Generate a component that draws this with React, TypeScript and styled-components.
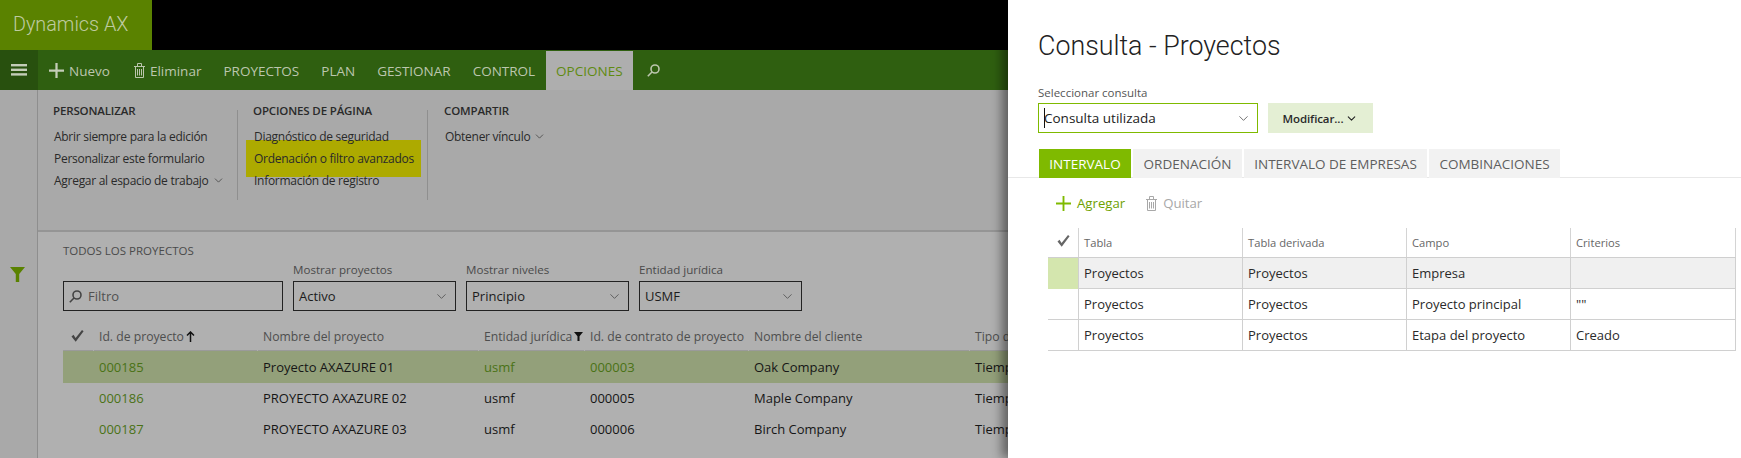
import styled, { createGlobalStyle } from "styled-components";
import { ChevronDown } from "lucide-react";

const GlobalStyle = createGlobalStyle`
  html, body {
    margin: 0;
    padding: 0;
    background: #fff;
    font-family: "Open Sans", "Noto Sans", sans-serif;
  }
  * { box-sizing: border-box; }
`;

const Page = styled.div`
  position: relative;
  width: 1741px;
  height: 458px;
  overflow: hidden;
  background: #b0b0b0;
  font-size: 13px;
`;

const TopBar = styled.div`
  height: 50px;
  background: #000;
`;

const Logo = styled.div`
  width: 152px;
  height: 50px;
  padding-left: 13px;
  background: #5a8200;
  color: #bfcba0;
  font-family: Roboto, "Open Sans", sans-serif;
  font-size: 19.8px;
  font-weight: 300;
  line-height: 50px;
`;

const NavBar = styled.div`
  display: flex;
  align-items: stretch;
  height: 40px;
  padding-top: 1px;
  background: #2f5f10;
  color: #bcc6ae;
  font-size: 13.5px;
`;

const Burger = styled.div`
  display: flex;
  align-items: center;
  justify-content: center;
  width: 38px;
  margin-top: -1px;
  padding-bottom: 1px;
  background: #28500e;
`;

const NavAction = styled.div<{ $left: number }>`
  display: flex;
  align-items: center;
  gap: 5px;
  margin-left: ${(p) => p.$left}px;
`;

const NavTab = styled.div<{ $active?: boolean; $left: number }>`
  display: flex;
  align-items: center;
  margin-left: ${(p) => p.$left}px;
  ${(p) =>
    p.$active &&
    `
    padding: 0 10px;
    background: #aeaeae;
    color: #5f8a10;
  `}
`;

const SearchButton = styled.div`
  display: flex;
  align-items: center;
  margin-left: 14px;
`;

const Body = styled.div`
  display: flex;
  height: 368px;
`;

const Rail = styled.div`
  flex: none;
  width: 38px;
  padding: 177px 0 0 10px;
  border-right: 1px solid #8e8e8e;
  background: #a9a9a9;
`;

const Main = styled.div`
  flex: 1;
  min-width: 0;
`;

const Ribbon = styled.div`
  display: flex;
  height: 142px;
  padding: 20px 0 0 15px;
  border-bottom: 2px solid #959595;
  background: #a9a9a9;
  color: #2a2a2a;
  isolation: isolate;
`;

const RibbonGroup = styled.div<{ $width: number }>`
  width: ${(p) => p.$width}px;
  height: 90px;
  padding-left: 15px;
  border-right: 1px solid #8f8f8f;
  &:first-child {
    padding-left: 0;
  }
  &:last-child {
    border-right: 0;
    padding-left: 16px;
  }
`;

const RibbonTitle = styled.div`
  height: 20px;
  margin-top: -9px;
  margin-bottom: 4px;
  font-size: 11.5px;
  font-weight: 600;
  letter-spacing: -0.15px;
  line-height: 20px;
  white-space: nowrap;
`;

const RibbonItem = styled.div<{ $marked?: boolean }>`
  position: relative;
  display: flex;
  align-items: center;
  gap: 3px;
  height: 22px;
  padding-left: 1px;
  font-size: 12px;
  letter-spacing: -0.28px;
  white-space: nowrap;
  ${(p) =>
    p.$marked &&
    `
    &::before {
      content: "";
      position: absolute;
      z-index: -1;
      left: -7px;
      top: -7px;
      width: 175px;
      height: 37px;
      background: #adaa00;
    }
  `}
`;

const ListArea = styled.div`
  padding: 11px 0 0 25px;
`;

const ListTitle = styled.div`
  height: 16px;
  color: #4a4a4a;
  font-size: 11.5px;
  line-height: 16px;
`;

const FilterRow = styled.div`
  display: flex;
  align-items: flex-end;
  gap: 10px;
  margin-top: 4px;
`;

const Field = styled.div`
  display: flex;
  flex-direction: column;
  width: 163px;
`;

const FieldLabel = styled.div`
  height: 18px;
  color: #4a4a4a;
  font-size: 11.6px;
  line-height: 14px;
`;

const Control = styled.div<{ $width?: number }>`
  display: flex;
  align-items: center;
  justify-content: space-between;
  width: ${(p) => p.$width ?? 163}px;
  height: 30px;
  padding: 0 6px 0 5px;
  border: 1px solid #222;
  color: #1c1c1c;
  font-size: 13px;
`;

const FilterText = styled.span`
  flex: 1;
  margin-left: 6px;
  color: #505050;
`;

const gridColumns = "30px 164px 221px 106px 164px 221px 400px";

const ListHeader = styled.div`
  display: grid;
  grid-template-columns: ${gridColumns};
  height: 28px;
  margin-top: 12px;
`;

const HeadCell = styled.div`
  display: flex;
  align-items: center;
  gap: 2px;
  height: 28px;
  margin-left: 1px;
  padding-left: 5px;
  border-bottom: 1px solid #9a9a9a;
  color: #4e4e4e;
  font-size: 12.2px;
  white-space: nowrap;
`;

const CheckCell = styled(HeadCell)`
  justify-content: center;
  margin-left: 0;
  padding: 0 2px 2px 0;
`;

const ListRow = styled.div<{ $selected?: boolean }>`
  display: grid;
  grid-template-columns: ${gridColumns};
  align-items: center;
  height: 31px;
  padding-bottom: 1px;
  background: ${(p) => (p.$selected ? "#93a07a" : "transparent")};
  color: #161616;
  font-size: 13px;
  &:first-of-type {
    height: 32px;
  }
`;

const ListCell = styled.div<{ $link?: boolean }>`
  padding-left: 6px;
  color: ${(p) => (p.$link ? "#4a7216" : "inherit")};
  white-space: nowrap;
`;

const Panel = styled.div`
  position: absolute;
  top: 0;
  right: 0;
  width: 733px;
  height: 458px;
  background: #fff;
  box-shadow: -6px 0 10px rgba(0, 0, 0, 0.45);
`;

const PanelTitle = styled.h1`
  height: 64px;
  margin: 0;
  padding: 27px 0 0 30px;
  color: #222;
  font-family: Roboto, "Open Sans", sans-serif;
  font-size: 26.8px;
  font-weight: 300;
  line-height: 38px;
`;

const QueryArea = styled.div`
  padding: 21px 0 0 30px;
`;

const QueryLabel = styled.div`
  height: 18px;
  color: #555;
  font-size: 11.5px;
  line-height: 16px;
`;

const QueryRow = styled.div`
  display: flex;
  gap: 10px;
`;

const QuerySelect = styled.div`
  display: flex;
  align-items: center;
  width: 220px;
  height: 30px;
  padding: 0 6px 0 5px;
  border: 1px solid #7fba00;
  color: #222;
  font-size: 13.5px;
`;

const Caret = styled.span`
  width: 1px;
  height: 20px;
  margin-right: -1px;
  background: #111;
`;

const QueryText = styled.span`
  flex: 1;
`;

const ModifyButton = styled.div`
  display: flex;
  align-items: center;
  justify-content: center;
  gap: 2px;
  width: 105px;
  height: 30px;
  background: #e4efd4;
  color: #2a2a2a;
  font-size: 11.5px;
  font-weight: 600;
  letter-spacing: -0.1px;
`;

const TabStrip = styled.div`
  display: flex;
  gap: 2px;
  height: 29px;
  margin-top: 16px;
  padding-left: 31px;
  border-bottom: 1px solid #e8e8e8;
`;

const Tab = styled.div<{ $active?: boolean; $width: number }>`
  display: flex;
  align-items: center;
  justify-content: center;
  width: ${(p) => p.$width}px;
  height: 29px;
  background: ${(p) => (p.$active ? "#7fba00" : "#f2f2f2")};
  color: ${(p) => (p.$active ? "#fff" : "#5e5e5e")};
  font-size: 13.5px;
  white-space: nowrap;
`;

const ActionBar = styled.div`
  display: flex;
  align-items: center;
  gap: 21px;
  height: 50px;
  padding-left: 48px;
`;

const ActionButton = styled.div<{ $disabled?: boolean }>`
  display: flex;
  align-items: center;
  gap: 6px;
  color: ${(p) => (p.$disabled ? "#a8a8a8" : "#6ea100")};
  font-size: 13.2px;
`;

const QueryTable = styled.div`
  width: 688px;
  margin-left: 40px;
`;

const queryColumns = "31px 164px 164px 164px 165px";

const QueryHead = styled.div`
  display: grid;
  grid-template-columns: ${queryColumns};
  height: 30px;
  border-bottom: 1px solid #cfcfcf;
`;

const QueryHeadCell = styled.div`
  padding: 7px 0 0 5px;
  border-right: 1px solid #d4d4d4;
  color: #666;
  font-size: 11.2px;
  line-height: 16px;
`;

const QueryCheckCell = styled(QueryHeadCell)`
  display: flex;
  justify-content: center;
  padding: 7px 0 0;
`;

const QueryBodyRow = styled.div<{ $current?: boolean }>`
  display: grid;
  grid-template-columns: ${queryColumns};
  height: 31px;
  border-bottom: 1px solid #d0d0d0;
  background: ${(p) => (p.$current ? "#f0f0f0" : "#fff")};
`;

const QueryCell = styled.div`
  padding-left: 5px;
  border-right: 1px solid #d0d0d0;
  color: #2a2a2a;
  font-size: 13px;
  line-height: 31px;
  white-space: nowrap;
`;

const RowMarker = styled.div<{ $current?: boolean }>`
  border-right: 1px solid #d0d0d0;
  background: ${(p) => (p.$current ? "#d4e6ae" : "transparent")};
`;

const PlusIcon = ({ size, color, weight }: { size: number; color: string; weight: number }) => (
  <svg width={size} height={size} viewBox="0 0 16 16">
    <path d="M8 0V16M0 8H16" stroke={color} strokeWidth={weight} fill="none" />
  </svg>
);

const TrashIcon = ({ color }: { color: string }) => (
  <svg width="11" height="15" viewBox="0 0 11 15" fill="none" stroke={color}>
    <path d="M0 3.5H11M3.5 3V0.5H7.5V3" />
    <path d="M1.5 3.5V14.5H9.5V3.5M3.5 6V12.5M5.5 6V12.5M7.5 6V12.5" />
  </svg>
);

const SearchIcon = ({ color }: { color: string }) => (
  <svg width="13" height="13" viewBox="0 0 13 13" fill="none" stroke={color} strokeWidth="1.6">
    <circle cx="8" cy="5" r="4" />
    <path d="M5 8L0.8 12.2" />
  </svg>
);

const CheckIcon = ({ color }: { color: string }) => (
  <svg width="13" height="12" viewBox="0 0 13 12">
    <path d="M0.5 6.5L2.5 4.8L4.6 8L11 0L12.6 1.2L4.7 11.8Z" fill={color} />
  </svg>
);

const FunnelIcon = ({ size, color }: { size: number; color: string }) => (
  <svg width={size} height={size} viewBox="0 0 14 14">
    <path d="M0 0H14L8.6 6.5V14H5.4V6.5Z" fill={color} />
  </svg>
);

const ArrowUpIcon = () => (
  <svg width="9" height="11" viewBox="0 0 9 11" fill="none" stroke="#111" strokeWidth="1.5">
    <path d="M4.5 11V1M1 4.5L4.5 1L8 4.5" />
  </svg>
);

const Chevron = ({ color = "#444", size = 15, weight = 1.2 }: { color?: string; size?: number; weight?: number }) => (
  <ChevronDown size={size} color={color} strokeWidth={weight} />
);

const projectRows = [
  { id: "000185", name: "Proyecto AXAZURE 01", contract: "000003", client: "Oak Company", selected: true },
  { id: "000186", name: "PROYECTO AXAZURE 02", contract: "000005", client: "Maple Company" },
  { id: "000187", name: "PROYECTO AXAZURE 03", contract: "000006", client: "Birch Company" },
];

const queryRows = [
  { field: "Empresa", criteria: "", current: true },
  { field: "Proyecto principal", criteria: '""' },
  { field: "Etapa del proyecto", criteria: "Creado" },
];

export default function App() {
  return (
    <Page>
      <GlobalStyle />
      <TopBar>
        <Logo>Dynamics AX</Logo>
      </TopBar>
      <NavBar>
        <Burger>
          <svg width="16" height="12" viewBox="0 0 16 12" fill="#c4cdb8">
            <rect width="16" height="2.4" />
            <rect y="4.6" width="16" height="2.4" />
            <rect y="9.2" width="16" height="2.4" />
          </svg>
        </Burger>
        <NavAction $left={11}>
          <PlusIcon size={15} color="#c4cdb8" weight={2.4} />
          Nuevo
        </NavAction>
        <NavAction $left={24}>
          <TrashIcon color="#bcc6ae" />
          Eliminar
        </NavAction>
        <NavTab $left={22}>PROYECTOS</NavTab>
        <NavTab $left={22}>PLAN</NavTab>
        <NavTab $left={22}>GESTIONAR</NavTab>
        <NavTab $left={22}>CONTROL</NavTab>
        <NavTab $left={11} $active>
          OPCIONES
        </NavTab>
        <SearchButton>
          <SearchIcon color="#bcc6ae" />
        </SearchButton>
      </NavBar>
      <Body>
        <Rail>
          <FunnelIcon size={15} color="#5a8200" />
        </Rail>
        <Main>
          <Ribbon>
            <RibbonGroup $width={185}>
              <RibbonTitle>PERSONALIZAR</RibbonTitle>
              <RibbonItem>Abrir siempre para la edición</RibbonItem>
              <RibbonItem>Personalizar este formulario</RibbonItem>
              <RibbonItem>
                Agregar al espacio de trabajo <Chevron size={13} weight={1.5} />
              </RibbonItem>
            </RibbonGroup>
            <RibbonGroup $width={190}>
              <RibbonTitle>OPCIONES DE PÁGINA</RibbonTitle>
              <RibbonItem>Diagnóstico de seguridad</RibbonItem>
              <RibbonItem $marked>Ordenación o filtro avanzados</RibbonItem>
              <RibbonItem>Información de registro</RibbonItem>
            </RibbonGroup>
            <RibbonGroup $width={200}>
              <RibbonTitle>COMPARTIR</RibbonTitle>
              <RibbonItem>
                Obtener vínculo <Chevron size={13} weight={1.5} />
              </RibbonItem>
            </RibbonGroup>
          </Ribbon>
          <ListArea>
            <ListTitle>TODOS LOS PROYECTOS</ListTitle>
            <FilterRow>
              <Control $width={220}>
                <SearchIcon color="#444" />
                <FilterText>Filtro</FilterText>
              </Control>
              <Field>
                <FieldLabel>Mostrar proyectos</FieldLabel>
                <Control>
                  Activo <Chevron />
                </Control>
              </Field>
              <Field>
                <FieldLabel>Mostrar niveles</FieldLabel>
                <Control>
                  Principio <Chevron />
                </Control>
              </Field>
              <Field>
                <FieldLabel>Entidad jurídica</FieldLabel>
                <Control>
                  USMF <Chevron />
                </Control>
              </Field>
            </FilterRow>
            <ListHeader>
              <CheckCell>
                <CheckIcon color="#444" />
              </CheckCell>
              <HeadCell>
                Id. de proyecto
                <ArrowUpIcon />
              </HeadCell>
              <HeadCell>Nombre del proyecto</HeadCell>
              <HeadCell>
                Entidad jurídica
                <FunnelIcon size={9} color="#111" />
              </HeadCell>
              <HeadCell>Id. de contrato de proyecto</HeadCell>
              <HeadCell>Nombre del cliente</HeadCell>
              <HeadCell>Tipo de proyecto</HeadCell>
            </ListHeader>
            <div>
              {projectRows.map((row) => (
                <ListRow key={row.id} $selected={row.selected}>
                  <span />
                  <ListCell $link>{row.id}</ListCell>
                  <ListCell>{row.name}</ListCell>
                  <ListCell $link={row.selected}>usmf</ListCell>
                  <ListCell $link={row.selected}>{row.contract}</ListCell>
                  <ListCell>{row.client}</ListCell>
                  <ListCell>Tiempo y material</ListCell>
                </ListRow>
              ))}
            </div>
          </ListArea>
        </Main>
      </Body>
      <Panel>
        <PanelTitle>Consulta - Proyectos</PanelTitle>
        <QueryArea>
          <QueryLabel>Seleccionar consulta</QueryLabel>
          <QueryRow>
            <QuerySelect>
              <Caret />
              <QueryText>Consulta utilizada</QueryText>
              <Chevron />
            </QuerySelect>
            <ModifyButton>
              Modificar... <Chevron size={13} color="#222" weight={2} />
            </ModifyButton>
          </QueryRow>
        </QueryArea>
        <TabStrip>
          <Tab $active $width={92}>
            INTERVALO
          </Tab>
          <Tab $width={109}>ORDENACIÓN</Tab>
          <Tab $width={183}>INTERVALO DE EMPRESAS</Tab>
          <Tab $width={131}>COMBINACIONES</Tab>
        </TabStrip>
        <ActionBar>
          <ActionButton>
            <PlusIcon size={15} color="#7fba00" weight={2} />
            Agregar
          </ActionButton>
          <ActionButton $disabled>
            <TrashIcon color="#a8a8a8" />
            Quitar
          </ActionButton>
        </ActionBar>
        <QueryTable>
          <QueryHead>
            <QueryCheckCell>
              <CheckIcon color="#666" />
            </QueryCheckCell>
            <QueryHeadCell>Tabla</QueryHeadCell>
            <QueryHeadCell>Tabla derivada</QueryHeadCell>
            <QueryHeadCell>Campo</QueryHeadCell>
            <QueryHeadCell>Criterios</QueryHeadCell>
          </QueryHead>
          {queryRows.map((row) => (
            <QueryBodyRow key={row.field} $current={row.current}>
              <RowMarker $current={row.current} />
              <QueryCell>Proyectos</QueryCell>
              <QueryCell>Proyectos</QueryCell>
              <QueryCell>{row.field}</QueryCell>
              <QueryCell>{row.criteria}</QueryCell>
            </QueryBodyRow>
          ))}
        </QueryTable>
      </Panel>
    </Page>
  );
}
